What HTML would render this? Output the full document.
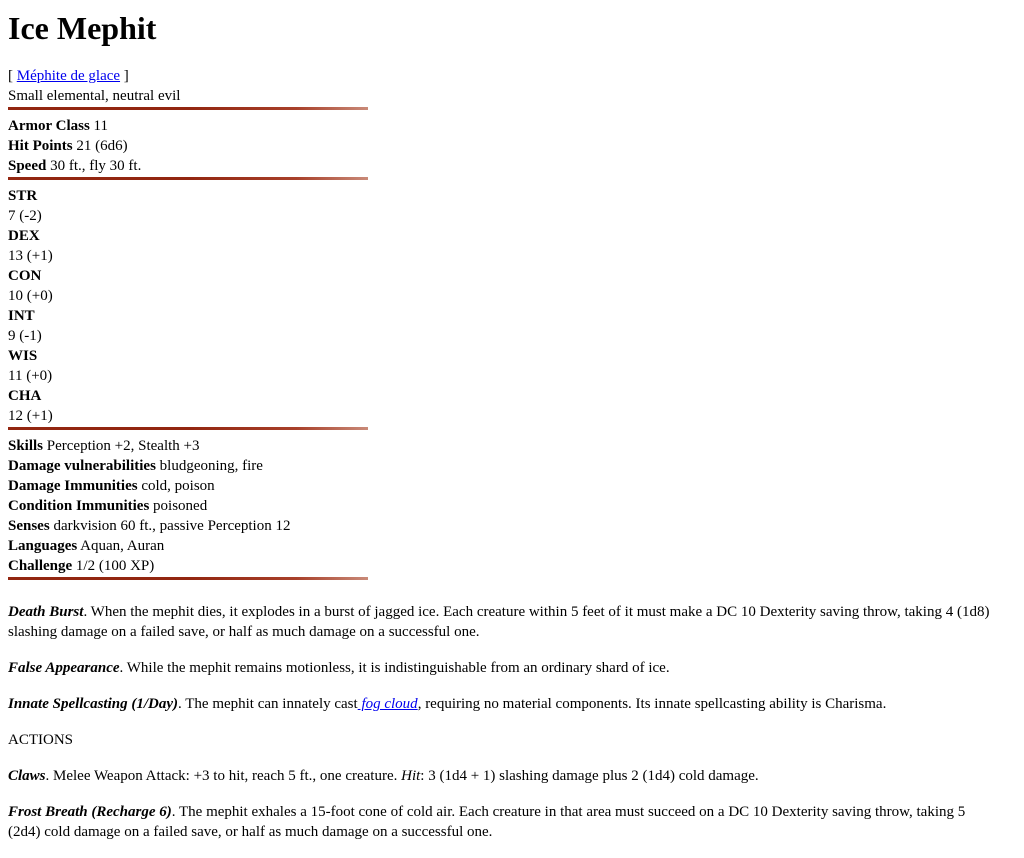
<!DOCTYPE html>
<html><head><meta charset="utf-8"><style>
body{margin:8px;font-family:"Liberation Serif",serif;font-size:15px;line-height:20px;color:#000;background:#fff}
h1{font-size:32px;line-height:40px;margin:0 0 18px;font-weight:bold}
.bar{width:360px;height:3px;margin:1px 0 6px;background:linear-gradient(to right,#922610 0%,#922610 50%,#a8402a 80%,#c98a78 100%)}
a{color:#00e}
p{margin:16px 0}
.sec{padding-top:6px}
</style></head><body>
<h1>Ice Mephit</h1>
<div>[ <a href="#">Méphite de glace</a> ]</div>
<div>Small elemental, neutral evil</div>
<div class="bar"></div>
<div><b>Armor Class</b> 11</div>
<div><b>Hit Points</b> 21 (6d6)</div>
<div><b>Speed</b> 30 ft., fly 30 ft.</div>
<div class="bar"></div>
<div><b>STR</b></div><div>7 (-2)</div>
<div><b>DEX</b></div><div>13 (+1)</div>
<div><b>CON</b></div><div>10 (+0)</div>
<div><b>INT</b></div><div>9 (-1)</div>
<div><b>WIS</b></div><div>11 (+0)</div>
<div><b>CHA</b></div><div>12 (+1)</div>
<div class="bar"></div>
<div><b>Skills</b> Perception +2, Stealth +3</div>
<div><b>Damage vulnerabilities</b> bludgeoning, fire</div>
<div><b>Damage Immunities</b> cold, poison</div>
<div><b>Condition Immunities</b> poisoned</div>
<div><b>Senses</b> darkvision 60 ft., passive Perception 12</div>
<div><b>Languages</b> Aquan, Auran</div>
<div><b>Challenge</b> 1/2 (100 XP)</div>
<div class="bar" style="margin-bottom:0"></div>
<div class="sec">
<p><b><i>Death Burst</i></b>. When the mephit dies, it explodes in a burst of jagged ice. Each creature within 5 feet of it must make a DC 10 Dexterity saving throw, taking 4 (1d8) slashing damage on a failed save, or half as much damage on a successful one.</p>
<p><b><i>False Appearance</i></b>. While the mephit remains motionless, it is indistinguishable from an ordinary shard of ice.</p>
<p><b><i>Innate Spellcasting (1/Day)</i></b>. The mephit can innately cast<a href="#"><i> fog cloud</i></a>, requiring no material components. Its innate spellcasting ability is Charisma.</p>
<p>ACTIONS</p>
<p><b><i>Claws</i></b>. Melee Weapon Attack: +3 to hit, reach 5 ft., one creature. <i>Hit</i>: 3 (1d4 + 1) slashing damage plus 2 (1d4) cold damage.</p>
<p><b><i>Frost Breath (Recharge 6)</i></b>. The mephit exhales a 15-foot cone of cold air. Each creature in that area must succeed on a DC 10 Dexterity saving throw, taking 5<br>(2d4) cold damage on a failed save, or half as much damage on a successful one.</p>
</div>
</body></html>
